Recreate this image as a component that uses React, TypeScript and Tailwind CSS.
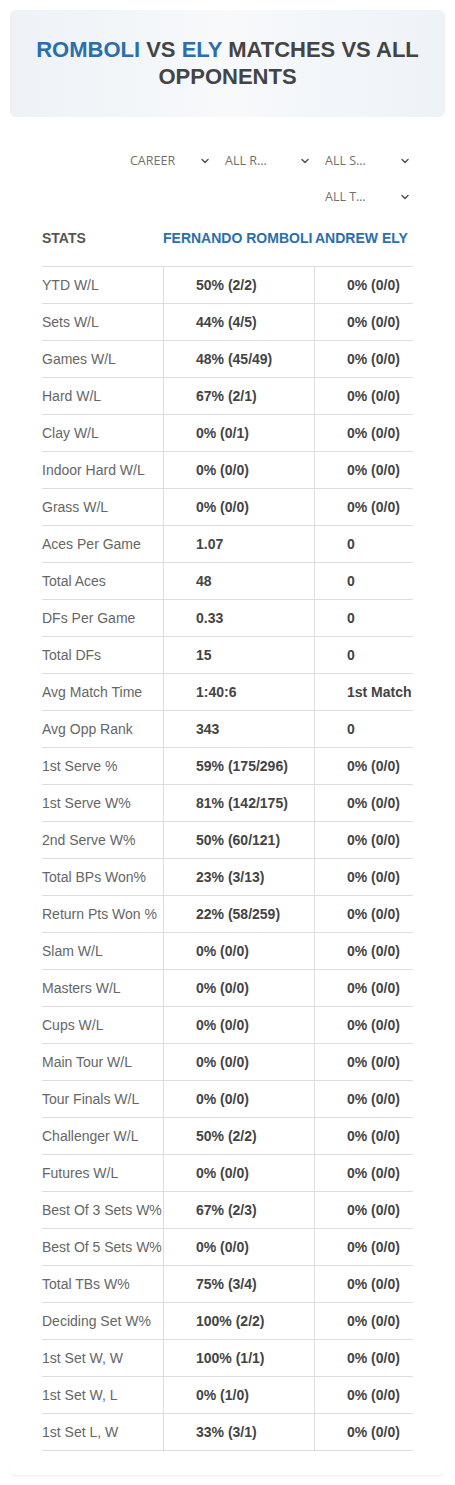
import { ChevronDown } from 'lucide-react';

type Row = [string, string, string];

const rows: Row[] = [
  ['YTD W/L', '50% (2/2)', '0% (0/0)'],
  ['Sets W/L', '44% (4/5)', '0% (0/0)'],
  ['Games W/L', '48% (45/49)', '0% (0/0)'],
  ['Hard W/L', '67% (2/1)', '0% (0/0)'],
  ['Clay W/L', '0% (0/1)', '0% (0/0)'],
  ['Indoor Hard W/L', '0% (0/0)', '0% (0/0)'],
  ['Grass W/L', '0% (0/0)', '0% (0/0)'],
  ['Aces Per Game', '1.07', '0'],
  ['Total Aces', '48', '0'],
  ['DFs Per Game', '0.33', '0'],
  ['Total DFs', '15', '0'],
  ['Avg Match Time', '1:40:6', '1st Match'],
  ['Avg Opp Rank', '343', '0'],
  ['1st Serve %', '59% (175/296)', '0% (0/0)'],
  ['1st Serve W%', '81% (142/175)', '0% (0/0)'],
  ['2nd Serve W%', '50% (60/121)', '0% (0/0)'],
  ['Total BPs Won%', '23% (3/13)', '0% (0/0)'],
  ['Return Pts Won %', '22% (58/259)', '0% (0/0)'],
  ['Slam W/L', '0% (0/0)', '0% (0/0)'],
  ['Masters W/L', '0% (0/0)', '0% (0/0)'],
  ['Cups W/L', '0% (0/0)', '0% (0/0)'],
  ['Main Tour W/L', '0% (0/0)', '0% (0/0)'],
  ['Tour Finals W/L', '0% (0/0)', '0% (0/0)'],
  ['Challenger W/L', '50% (2/2)', '0% (0/0)'],
  ['Futures W/L', '0% (0/0)', '0% (0/0)'],
  ['Best Of 3 Sets W%', '67% (2/3)', '0% (0/0)'],
  ['Best Of 5 Sets W%', '0% (0/0)', '0% (0/0)'],
  ['Total TBs W%', '75% (3/4)', '0% (0/0)'],
  ['Deciding Set W%', '100% (2/2)', '0% (0/0)'],
  ['1st Set W, W', '100% (1/1)', '0% (0/0)'],
  ['1st Set W, L', '0% (1/0)', '0% (0/0)'],
  ['1st Set L, W', '33% (3/1)', '0% (0/0)'],
];

function Select({ label, narrow }: { label: string; narrow?: boolean }) {
  return (
    <div
      className={`${narrow ? 'w-[95px]' : 'w-[100px]'} h-9 flex items-center justify-between pl-[5px] pr-[9px] text-[12.5px] text-[#707070] font-['Open_Sans',sans-serif]`}
    >
      <span>{label}</span>
      <ChevronDown className="w-3 h-3 text-[#555]" strokeWidth={3} />
    </div>
  );
}

export default function App() {
  return (
    <div className="w-[455px] bg-white font-['Liberation_Sans',Arial,sans-serif] pt-[10px] px-[10px] pb-[9px]">
      {/* HEADER */}
      <div className="h-[107px] rounded-md bg-gradient-to-r from-[#eef2f6] via-[#f7f9fb] to-[#eef2f7] flex items-center justify-center px-4">
        <h1 className="text-center text-[22px] font-bold leading-[27px] text-[#444] mt-[-1px]">
          <span className="text-[#2a6fab]">ROMBOLI</span> VS{' '}
          <span className="text-[#2a6fab]">ELY</span> MATCHES VS ALL OPPONENTS
        </h1>
      </div>

      {/* CARD */}
      <div className="rounded-b-md border-b border-[#eeeeee] shadow-[0_1px_2px_rgba(0,0,0,0.03)] pt-[26px] pb-[24px] pl-[32px] pr-[32px]">
        <div className="flex flex-wrap justify-end pl-[78px] mr-[-7px]">
          <Select label="CAREER" narrow />
          <Select label="ALL R…" />
          <Select label="ALL S…" />
          <Select label="ALL T…" />
        </div>

        <div className="grid grid-cols-[121px_151px_99px] h-[44px] mt-[1px] mb-[6px] items-center text-[14px] font-bold">
          <div className="text-[#555]">STATS</div>
          <div className="text-[#2a6fab] whitespace-nowrap">FERNANDO ROMBOLI</div>
          <div className="text-[#2a6fab] whitespace-nowrap pl-[1px]">ANDREW ELY</div>
        </div>

        <div className="w-[371px] border-t border-[#dddddd]">
          {rows.map(([label, a, b]) => (
            <div
              key={label}
              className="grid grid-cols-[121px_151px_99px] h-[37px] border-b border-[#dddddd] text-[14px]"
            >
              <div className="flex items-center text-[#666] whitespace-nowrap">
                {label}
              </div>
              <div className="flex items-center pl-[32px] font-bold text-[#444] whitespace-nowrap border-l border-[#dddddd]">
                {a}
              </div>
              <div className="flex items-center pl-[32px] font-bold text-[#444] whitespace-nowrap border-l border-[#dddddd]">
                {b}
              </div>
            </div>
          ))}
        </div>
      </div>
    </div>
  );
}
